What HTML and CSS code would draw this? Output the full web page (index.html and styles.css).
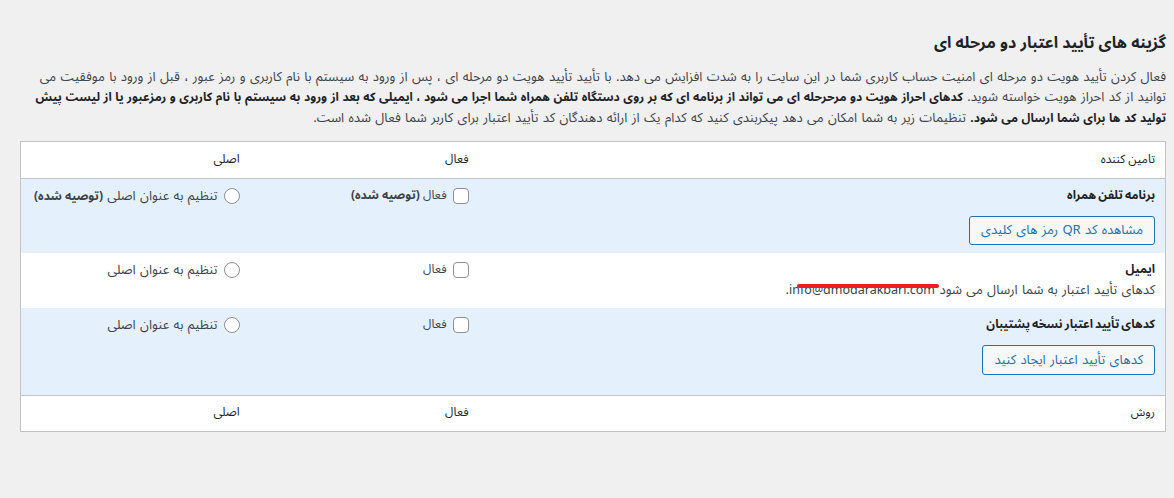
FILE: index.html
```html
<!DOCTYPE html>
<html lang="fa" dir="rtl">
<head>
<meta charset="utf-8">
<title>گزینه های تأیید اعتبار دو مرحله ای</title>
<link rel="stylesheet" href="styles.css">
</head>
<body>
<div class="wrap">
  <h2 class="title">گزینه های تأیید اعتبار دو مرحله ای</h2>
  <p class="desc">فعال کردن تأیید هویت دو مرحله ای امنیت حساب کاربری شما در این سایت را به شدت افزایش می دهد. با تأیید تأیید هویت دو مرحله ای ، پس از ورود به سیستم با نام کاربری و رمز عبور ، قبل از ورود با موفقیت می<br>توانید از کد احراز هویت خواسته شوید. <strong>کدهای احراز هویت دو مرحرحله ای می تواند از برنامه ای که بر روی دستگاه تلفن همراه شما اجرا می شود ، ایمیلی که بعد از ورود به سیستم با نام کاربری و رمزعبور یا از لیست پیش<br>تولید کد ها برای شما ارسال می شود.</strong> تنظیمات زیر به شما امکان می دهد پیکربندی کنید که کدام یک از ارائه دهندگان کد تأیید اعتبار برای کاربر شما فعال شده است.</p>
  <table class="providers">
    <thead>
      <tr>
        <th class="col-provider">تامین کننده</th>
        <th class="col-enabled">فعال</th>
        <th class="col-primary">اصلی</th>
      </tr>
    </thead>
    <tbody>
      <tr class="alt first">
        <td class="col-provider">
          <div class="name">برنامه تلفن همراه</div>
          <button class="btn" type="button">مشاهده کد QR رمز های کلیدی</button>
        </td>
        <td class="col-enabled"><label class="opt"><span class="cbox"></span><span class="lbl-on">فعال <strong>(توصیه شده)</strong></span></label></td>
        <td class="col-primary"><label class="opt"><span class="radio"></span><span class="lbl-main">تنظیم به عنوان اصلی <strong>(توصیه شده)</strong></span></label></td>
      </tr>
      <tr class="plain">
        <td class="col-provider">
          <div class="name">ایمیل</div>
          <div class="sub">کدهای تأیید اعتبار به شما ارسال می شود <bdi class="mail">info@dmodarakbari.com<span class="redact"></span></bdi>.</div>
        </td>
        <td class="col-enabled"><label class="opt"><span class="cbox"></span><span class="lbl-on">فعال</span></label></td>
        <td class="col-primary"><label class="opt"><span class="radio"></span><span class="lbl-main">تنظیم به عنوان اصلی</span></label></td>
      </tr>
      <tr class="alt last">
        <td class="col-provider">
          <div class="name">کدهای تأیید اعتبار نسخه پشتیبان</div>
          <button class="btn" type="button">کدهای تأیید اعتبار ایجاد کنید</button>
        </td>
        <td class="col-enabled"><label class="opt"><span class="cbox"></span><span class="lbl-on">فعال</span></label></td>
        <td class="col-primary"><label class="opt"><span class="radio"></span><span class="lbl-main">تنظیم به عنوان اصلی</span></label></td>
      </tr>
    </tbody>
    <tfoot>
      <tr>
        <th class="col-provider">روش</th>
        <th class="col-enabled">فعال</th>
        <th class="col-primary">اصلی</th>
      </tr>
    </tfoot>
  </table>
</div>
</body>
</html>
```

FILE: styles.css
```css
html, body {
  margin: 0;
  padding: 0;
  background: #f0f0f1;
}
body {
  font-family: "Noto Sans Arabic", "DejaVu Sans", sans-serif;
  font-size: 12px;
  color: #3c434a;
  line-height: 20px;
}
.wrap {
  padding: 30px 8px 0 20px;
}
.title {
  font-size: 16px;
  font-weight: bold;
  color: #1d2327;
  margin: 0 0 11px 0;
  line-height: 26px;
}
.desc {
  margin: 0 0 12px 0;
  font-size: 13px;
  word-spacing: 1px;
  line-height: 20px;
  color: #3c434a;
  white-space: nowrap;
}
.desc strong {
  font-size: 12px;
  word-spacing: 0.5px;
  color: #1d2327;
}
.providers {
  width: 100%;
  border-collapse: collapse;
  border: 1px solid #c3c4c7;
  background: #fff;
  table-layout: fixed;
}
.providers th, .providers td {
  box-sizing: border-box;
  text-align: right;
  vertical-align: top;
  padding: 7px 10px 8px 10px;
}
.providers thead th, .providers tfoot th {
  font-weight: normal;
  color: #1d2327;
  height: 36px;
  line-height: 20px;
  padding-top: 8px;
}
.providers thead th {
  border-bottom: 1px solid #c3c4c7;
}
.providers tfoot th {
  border-top: 1px solid #c3c4c7;
  height: 33px;
  padding-top: 7px;
}
.col-enabled, .col-primary {
  width: 20%;
}
tr.alt td {
  background: #e5f0fd;
}
.name {
  font-weight: bold;
  color: #1d2327;
  line-height: 20px;
  word-spacing: -1px;
}
.sub {
  font-size: 13px;
  word-spacing: 1px;
  line-height: 20px;
  color: #3c434a;
}
.mail {
  position: relative;
  font-size: 12.5px;
  word-spacing: 0;
}
.redact {
  position: absolute;
  left: 8px;
  right: -4px;
  top: 7px;
  height: 4px;
  border-radius: 2px;
  background: #ed1c24;
}
.btn {
  display: block;
  margin: 10px 0 0 0;
  height: 29px;
  padding: 0 11px;
  font: inherit;
  font-size: 13px;
  word-spacing: 1px;
  color: #2271b1;
  background: #f6f7f7;
  border: 1px solid #2271b1;
  border-radius: 3px;
  line-height: 27px;
}
tr.first td {
  padding-bottom: 8px;
}
tr.last td {
  padding-bottom: 20px;
}
tr.last .btn {
  height: 30px;
  line-height: 28px;
}
.opt {
  display: flex;
  align-items: center;
  gap: 6px;
  color: #3c434a;
  line-height: 20px;
}
.lbl-main {
  font-size: 13px;
  word-spacing: 1px;
}
.lbl-main strong, .lbl-on strong {
  font-size: 12px;
  word-spacing: 0;
  color: #3c434a;
}
.cbox {
  flex: none;
  width: 14px;
  height: 14px;
  border: 1px solid #8c8f94;
  border-radius: 4px;
  background: #fff;
}
.radio {
  flex: none;
  width: 14px;
  height: 14px;
  border: 1px solid #8c8f94;
  border-radius: 50%;
  background: #fff;
  margin-top: -1px;
}
```
